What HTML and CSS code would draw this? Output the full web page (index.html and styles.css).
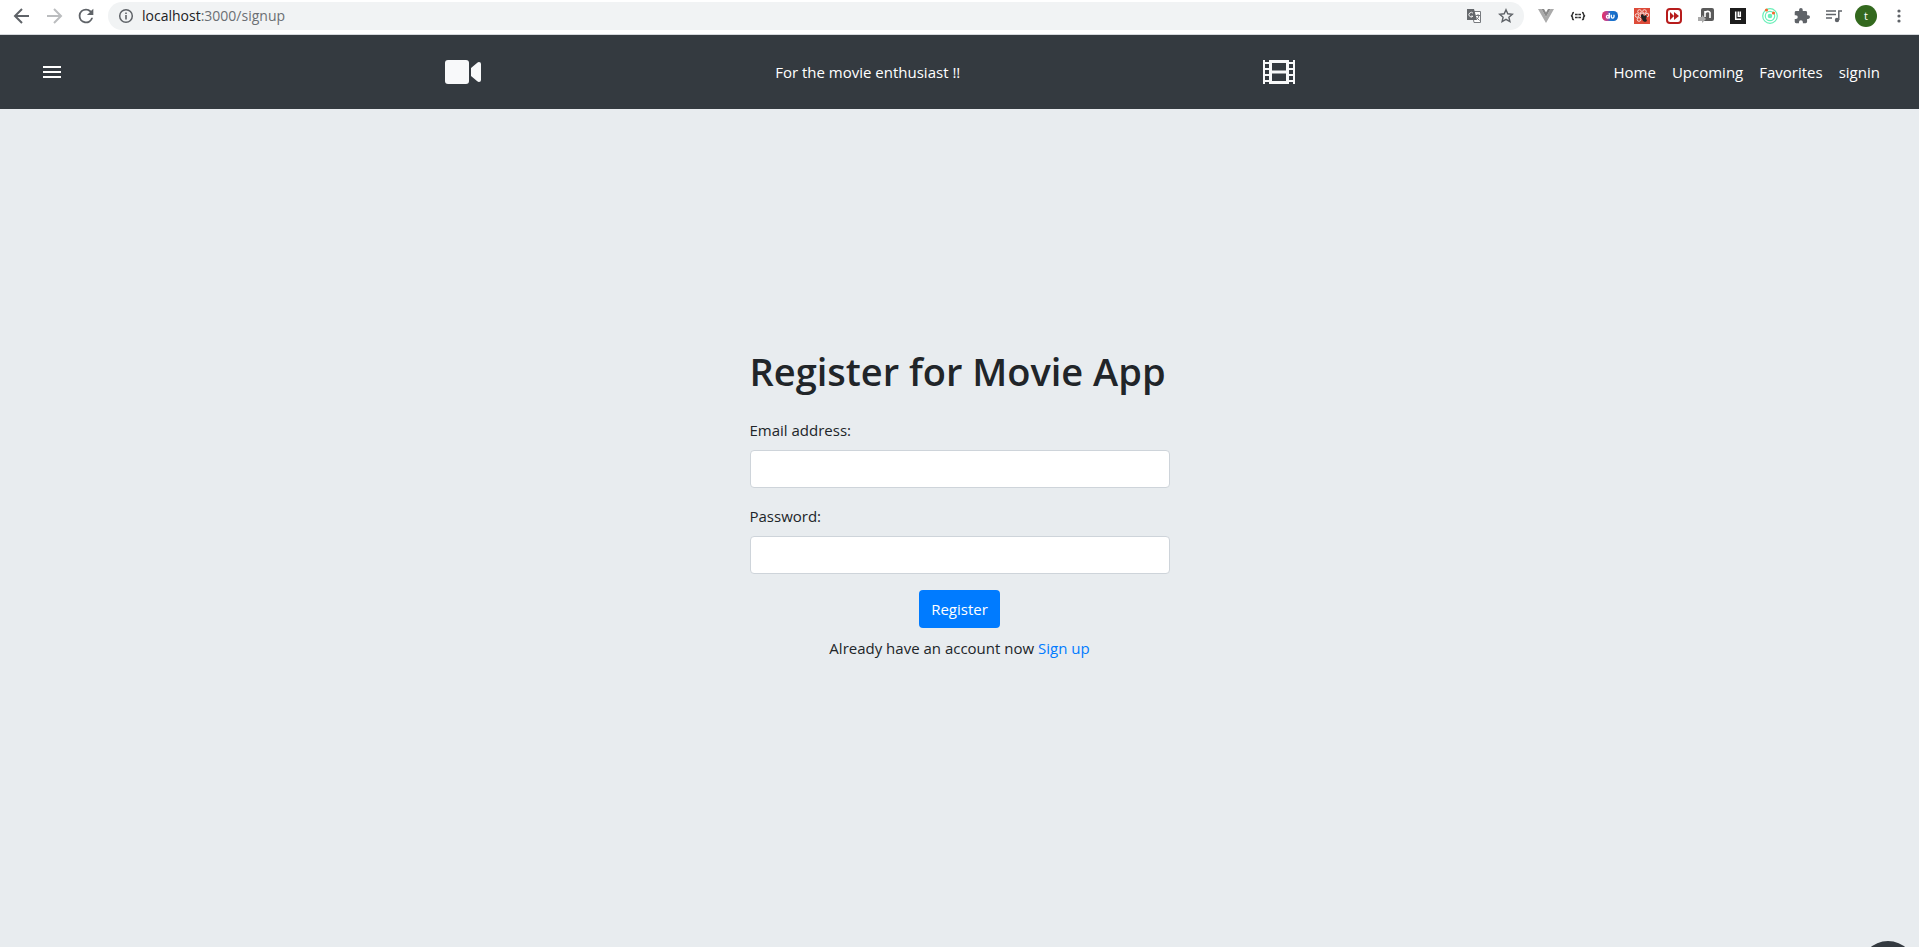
FILE: index.html
```html
<!DOCTYPE html>
<html lang="en">
<head>
<meta charset="utf-8">
<title>Movie App</title>
<link rel="stylesheet" href="styles.css">
</head>
<body>
<div class="toolbar">
  <button class="tool" aria-label="Back"><svg width="24" height="24" viewBox="0 0 24 24"><path fill="none" stroke="#5f6368" stroke-width="2" d="M19 12H6M12 5l-7 7 7 7"/></svg></button>
  <button class="tool" aria-label="Forward"><svg width="24" height="24" viewBox="0 0 24 24"><path fill="none" stroke="#bbbdbf" stroke-width="2" d="M5 12h13M12 5l7 7-7 7"/></svg></button>
  <button class="tool" aria-label="Reload"><svg width="22" height="22" viewBox="0 0 24 24"><path fill="#5f6368" d="M17.65 6.35A7.96 7.96 0 0 0 12 4a8 8 0 1 0 7.73 10h-2.08A6 6 0 1 1 12 6c1.66 0 3.14.69 4.22 1.78L13 11h7V4z"/></svg></button>
  <div class="address">
    <svg width="16" height="16" viewBox="0 0 16 16"><circle cx="8" cy="8" r="6.3" fill="none" stroke="#5f6368" stroke-width="1.5"/><path fill="#5f6368" d="M7.2 7h1.6v4.5H7.2zM7.2 4.4h1.6V6H7.2z"/></svg>
    <span class="url"><span class="host">localhost</span>:3000/signup</span>
    <button class="mark" aria-label="Translate"><svg width="16" height="16" viewBox="0 0 16 16"><path fill="#fff" stroke="#777a7e" d="M6 3.500h8.500v11H8z"/><path fill="#65686c" d="M1 1h7l3 11H1z"/><path fill="none" stroke="#eee" d="M7 5.200a2.300 2.300 0 1 0 0 3H5"/><path fill="none" stroke="#777a7e" d="M9.500 7.500H14M12 6v1.500M13 7.500q-.5 3-3 4.500M10.500 9.500l3 3"/></svg></button>
    <button class="mark" aria-label="Bookmark"><svg width="16" height="16" viewBox="0 0 16 16"><path fill="none" stroke="#5f6368" stroke-width="1.400" d="M8 1.800l1.800 4 4.500.4-3.400 3 1 4.400L8 11.300l-3.900 2.300 1-4.400-3.400-3 4.500-.4z"/></svg></button>
  </div>
  <div class="extensions">
    <svg width="16" height="16" viewBox="0 0 16 16"><path fill="#aaa" d="M0 1h3.500L8 9l4.500-8H16L8 15z"/><path fill="#888" d="M3.500 1H6l2 3.500L10 1h2.500L8 9z"/></svg>
    <svg width="16" height="16" viewBox="0 0 16 16"><path fill="none" stroke="#333" stroke-width="1.500" d="M4 4.500Q2.500 4.500 2.500 6T1 8q1.500 0 1.500 2T4 11.500M12 4.500q1.500 0 1.500 1.500T15 8q-1.500 0-1.500 2T12 11.500"/><path stroke="#333" stroke-width="1.500" d="M5 6.500h2.700M8.300 6.500H11M5 9.500h2.700M8.300 9.500H11"/></svg>
    <svg width="16" height="16" viewBox="0 0 16 16"><defs><linearGradient id="du"><stop stop-color="#e82a63"/><stop offset=".35" stop-color="#b04a9a"/><stop offset=".55" stop-color="#1976d2"/><stop offset="1" stop-color="#1565c0"/></linearGradient></defs><rect y="3" width="16" height="10" rx="4.500" fill="url(#du)"/><path fill="none" stroke="#fff" stroke-width="1.300" d="M7.300 5v5.500"/><circle cx="5.800" cy="8.700" r="1.400" fill="none" stroke="#fff" stroke-width="1.300"/><path fill="none" stroke="#fff" stroke-width="1.300" d="M9.300 6.800v2q0 1.400 1.300 1.400T12 8.800v-2"/></svg>
    <svg width="16" height="16" viewBox="0 0 16 16"><path fill="#dd4b39" d="M0 0h16v16H0z"/><g fill="none" stroke="#f6ddd8"><circle cx="5.500" cy="3.500" r="1.800"/><circle cx="10.500" cy="3.500" r="1.800"/><circle cx="3" cy="7.500" r="1.800"/><circle cx="13" cy="7" r="1.800"/><circle cx="5" cy="11.500" r="1.800"/><circle cx="8" cy="7" r="2"/></g><path fill="#222" d="M7 7l2-1 1 2 2-1 1 2-1 1 1 3-2 1-2-1-1-2-1-2z"/></svg>
    <svg width="16" height="16" viewBox="0 0 16 16"><rect x="1" y="1" width="14" height="14" rx="3" fill="#fff" stroke="#b71c1c" stroke-width="2"/><path fill="#b71c1c" d="M4 4l4 4-4 4zM8 4l5 4-5 4z"/></svg>
    <svg width="16" height="16" viewBox="0 0 16 16"><rect x="3" width="13" height="13" rx="2" fill="#5a5a5a"/><path fill="none" stroke="#fff" stroke-width="1.600" d="M7 9V3M7 5q1.500-2 3.500-1.500T12 6v4"/><path fill="#aaa" d="M0 9h4V7l4 4-4 4v-2H0z"/></svg>
    <svg width="16" height="16" viewBox="0 0 16 16"><path fill="#1c1c1c" d="M0 0h16v16H0z"/><path fill="none" stroke="#fff" stroke-width="1.500" d="M5.700 3.500v7.700h5.300M8.300 3.500v4.700h2V3.500"/></svg>
    <svg width="16" height="16" viewBox="0 0 16 16"><g fill="none" stroke="#69efb8" stroke-width="1.200"><circle cx="8" cy="8" r="7.300"/><circle cx="8" cy="8" r="4.700"/></g><circle cx="8" cy="8" r="2.300" fill="#69efb8"/><circle cx="4.500" cy="2" r="1.600" fill="#f4692e"/><circle cx="11.500" cy="5" r="1.600" fill="#f4692e"/></svg>
    <svg width="16" height="16" viewBox="1 1 22 22"><path fill="#5f6368" d="M20.500 11H19V7a2 2 0 0 0-2-2h-4V3.500a2.500 2.500 0 0 0-5 0V5H4a2 2 0 0 0-2 2v3.800h1.500a2.700 2.700 0 0 1 0 5.400H2V20a2 2 0 0 0 2 2h3.800v-1.500a2.700 2.700 0 0 1 5.400 0V22H17a2 2 0 0 0 2-2v-4h1.500a2.500 2.500 0 0 0 0-5z"/></svg>
    <svg width="16" height="16" viewBox="0 0 16 16"><path fill="none" stroke="#5f6368" stroke-width="1.500" d="M0 3h10M0 6.500h10M0 10h6M12.800 12V3H16"/><circle cx="11" cy="12" r="2.200" fill="#5f6368"/></svg>
  </div>
  <button class="avatar" aria-label="Profile">t</button>
  <button class="more" aria-label="Menu"><svg width="4" height="16" viewBox="0 0 4 16"><g fill="#5f6368"><circle cx="2" cy="3" r="1.600"/><circle cx="2" cy="8" r="1.600"/><circle cx="2" cy="13" r="1.600"/></g></svg></button>
</div>
<header class="header">
  <button class="burger" aria-label="Open menu"><svg width="24" height="24" viewBox="0 0 24 24"><path fill="#fff" d="M3 18h18v-2H3v2zm0-5h18v-2H3v2zm0-7v2h18V6H3z"/></svg></button>
  <svg width="36" height="24" viewBox="0 0 36 24"><rect width="24" height="24" rx="3" fill="#f8f9fa"/><path fill="#f8f9fa" d="M26 8l6-5q1-1 2-1 2 0 2 2v16q0 2-2 2-1 0-2-1l-6-5z"/></svg>
  <p class="tagline">For the movie enthusiast !!</p>
  <svg width="32" height="24" viewBox="0 0 32 24"><path fill="#f8f9fa" fill-rule="evenodd" d="M0 0h2v2h4V0h20v2h4V0h2v24h-2v-2h-4v2H6v-2H2v2H0zM2 4v4h4V4zM2 10v4h4v-4zM2 16v4h4v-4zM26 4v4h4V4zM26 10v4h4v-4zM26 16v4h4v-4zM9 3v7.500h14V3zM9 13.500V21h14v-7.500z"/></svg>
  <nav class="nav"><a href="#">Home</a><a href="#">Upcoming</a><a href="#">Favorites</a><a href="#">signin</a></nav>
</header>
<main class="main">
  <form class="form">
    <h1 class="title">Register for Movie App</h1>
    <label class="label" for="email">Email address:</label>
    <input class="input" id="email" type="email">
    <label class="label" for="password">Password:</label>
    <input class="input" id="password" type="password">
    <button class="submit" type="submit">Register</button>
    <p class="note">Already have an account now <a href="#">Sign up</a></p>
  </form>
</main>
<button class="fab" aria-label="Scroll to top"></button>
</body>
</html>
```
FILE: styles.css
```css
* { box-sizing: border-box; }
body {
  margin: 0;
  min-height: 100vh;
  display: flex;
  flex-direction: column;
  overflow: hidden;
  background: #e8ecef;
  color: #212529;
  font: 15px/24px "Open Sans", "Noto Sans", sans-serif;
}
button { border: 0; padding: 0; background: none; font: inherit; cursor: pointer; }
svg { display: block; flex: none; }
a { color: #007bff; text-decoration: none; }
p, h1 { margin: 0; }

.toolbar {
  display: flex;
  align-items: center;
  height: 35px;
  padding: 0 18px 3px 10px;
  background: #fff;
  border-bottom: 1px solid #d5d8dc;
}
.tool { display: flex; justify-content: center; width: 24px; margin-right: 8px; }
.address {
  display: flex;
  flex: 1;
  align-items: center;
  height: 28px;
  margin-left: 2px;
  padding: 0 10px;
  border-radius: 14px;
  background: #f1f3f4;
}
.url { flex: 1; margin-left: 8px; color: #6b6f73; font-size: 14px; }
.host { color: #202124; }
.mark { margin-left: 16px; }
.extensions { display: flex; gap: 16px; margin: 0 13px 0 14px; }
.avatar {
  width: 22px;
  height: 22px;
  border-radius: 50%;
  background: #33691e;
  color: #fff;
  font-size: 11px;
  line-height: 22px;
}
.more { margin-left: 20px; }

.header {
  display: flex;
  align-items: center;
  justify-content: space-between;
  height: 74px;
  padding: 0 39px 0 28px;
  background: #343a40;
  color: #fff;
}
.burger { margin-right: 74px; padding: 12px; }
.tagline { margin-right: 8px; }
.nav { display: flex; gap: 16px; margin-left: 24px; }
.nav a { color: #fff; }

.main { display: flex; flex: 1; justify-content: center; align-items: flex-start; padding-top: 238px; }
.form { display: flex; flex-direction: column; width: 420px; }
.title { margin-bottom: 23px; font-size: 38px; line-height: 48px; font-weight: 600; white-space: nowrap; }
.label { margin-bottom: 8px; }
.input {
  height: 38px;
  margin-bottom: 16px;
  padding: 6px 12px;
  border: 1px solid #ced4da;
  border-radius: 4px;
  background: #fff;
  font: inherit;
}
.submit { align-self: center; height: 38px; padding: 0 12px; border-radius: 4px; background: #007bff; color: #fff; }
.note { margin-top: 8px; text-align: center; }
.fab { position: fixed; right: 3px; bottom: -50px; width: 56px; height: 56px; border-radius: 50%; background: #343a40; }
```
